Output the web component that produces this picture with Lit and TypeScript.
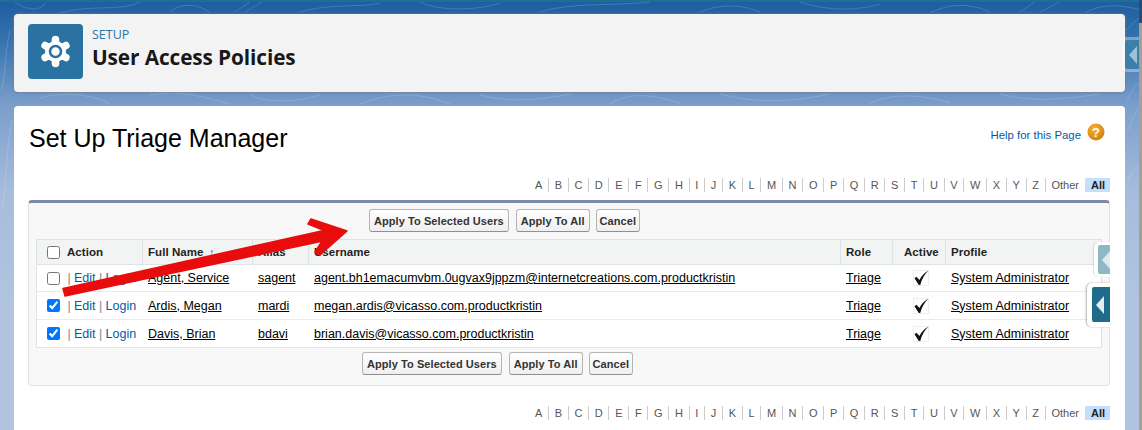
import { LitElement, html, css, svg } from "lit";
import { customElement } from "lit/decorators.js";

const LETTERS = [..."ABCDEFGHIJKLMNOPQRSTUVWXYZ", "Other"];
const USERS = [
  { checked: false, name: "Agent, Service", alias: "sagent", mail: "agent.bh1emacumvbm.0ugvax9jppzm@internetcreations.com.productkristin" },
  { checked: true, name: "Ardis, Megan", alias: "mardi", mail: "megan.ardis@vicasso.com.productkristin" },
  { checked: true, name: "Davis, Brian", alias: "bdavi", mail: "brian.davis@vicasso.com.productkristin" },
];

@customElement("app-root")
export class AppRoot extends LitElement {
  static styles = css`
    :host { display: block; position: relative; width: 1142px; height: 430px; overflow: hidden; font-family: "Liberation Sans", Arial, sans-serif; background: linear-gradient(180deg, #1b5d9e 0, #3f78b3 50px, #7b9ecb 105px, #a5bcdc 190px, #b0c4df 300px); }
    .topline { height: 2px; background: #1f6e93; }
    .rail { position: absolute; right: 0; top: 0; bottom: 0; width: 3px; background: #a59f9a; }
    .rail-top { position: absolute; right: 0; top: 0; height: 23px; width: 3px; background: #2c4a73; }
    .topo { position: absolute; inset: 0; width: 1142px; height: 430px; }
    .page { position: relative; display: flex; flex-direction: column; gap: 14px; padding: 12px 17px 0 14px; }
    .head { box-sizing: border-box; height: 78px; background: #f3f3f3; border-radius: 4px; box-shadow: 0 0 2px 1px rgba(120,120,120,.55); display: flex; align-items: flex-start; padding: 10px 14px; gap: 9px; }
    .logo { width: 55px; height: 55px; border-radius: 4px; background: #2a72a1; flex: none; display: block; }
    .crumb { color: #2a72a1; font: 12.5px/14px "Open Sans", sans-serif; margin-top: 4px; }
    .title { color: #181818; font: 700 20.8px/28px "Open Sans", sans-serif; margin-top: 1px; letter-spacing: -.1px; }
    .card { background: #fff; border-radius: 4px 4px 0 0; height: 340px; padding: 0 15px 0 14px; }
    .top { display: flex; justify-content: space-between; padding-top: 17px; height: 40px; }
    h1 { margin: 0 0 0 1px; font: 400 25px/30px "Liberation Sans", sans-serif; color: #000; }
    .help { display: flex; gap: 6px; align-items: flex-start; padding-right: 5px; color: #015ba7; font-size: 11.4px; }
    .help span { padding-top: 6px; }
    .alpha { display: flex; justify-content: flex-end; height: 14px; align-items: center; font-size: 11px; color: #555; }
    .alpha.one { margin-top: 15px; }
    .alpha.two { margin-top: 20px; }
    .alpha span { padding: 0 5.71px; border-right: 1px solid #ccc; line-height: 14px; }
    .alpha span:nth-last-child(2) { border-right: 0; padding-right: 6px; }
    .alpha b { background: #c3dffc; color: #222; padding: 0 5px 0 6px; line-height: 14px; }
    .panel { box-sizing: border-box; margin-top: 8px; height: 186px; background: #f8f8f8; border: 1px solid #e0e3e5; border-top: 3px solid #7c89a8; border-radius: 4px; padding: 6px 7px 0; }
    .btns { display: flex; gap: 7px; height: 23px; }
    .btns.t { padding-left: 333px; margin-bottom: 7px; }
    .btns.b { padding-left: 326px; margin-top: 4px; }
    button { box-sizing: border-box; height: 23px; padding: 0 4px; border: 1px solid #b5b5b5; border-bottom-color: #8f8f8f; border-radius: 3px; background: linear-gradient(#fff, #efefef); color: #333; font: 700 11px "Liberation Sans", sans-serif; letter-spacing: .07px; white-space: nowrap; }
    button:last-child { margin-left: -1px; padding: 0 3px; }
    .table { width: 1066px; border: 1px solid #e0e3e5; background: #fff; display: grid; grid-template-columns: 106px 110px 56px 532px 52px 53px 155px; font-size: 12.5px; color: #000; box-sizing: border-box; }
    .th { height: 25px; background: #f2f3f3; border-bottom: 1px solid #e0e3e5; border-right: 1px solid #e0e3e5; display: flex; align-items: center; padding-left: 5px; font-weight: 700; font-size: 11.5px; color: #222; letter-spacing: .05px; box-sizing: border-box; }
    .th:nth-child(7) { border-right: 0; }
    .th.first { padding-left: 10px; gap: 7px; }
    .th.center { padding-left: 11px; }
    .sort { color: #666; font-size: 13px; margin-left: 5px; }
    input { width: 13px; height: 13px; margin: 0; accent-color: #0075ff; }
    .td { height: 28px; border-bottom: 1px solid #e8eaec; display: flex; align-items: center; padding-left: 5px; box-sizing: border-box; white-space: nowrap; }
    .td.r0 { height: 27px; }
    .td.r2 { border-bottom: 0; height: 27px; }
    .td.act { padding-left: 10px; color: #888; }
    .td.act a { color: #015ba7; }
    .td.act i { font-style: normal; padding: 0 3.4px; }
    .td.act input { margin-right: 4px; }
    .td.center { justify-content: center; padding: 0 0 0 3px; }
    .td u { color: #000; }
    .check { width: 16px; height: 16px; display: block; }
    .tab { position: absolute; box-sizing: border-box; background: #fff; border-radius: 5px 0 0 5px; display: flex; align-items: center; }
    .tab .fill { display: flex; align-items: center; justify-content: flex-start; height: 100%; width: 100%; border-radius: 2px 0 0 2px; }
    .tab svg { display: block; margin-left: 4px; }
    .tab1 { left: 1094px; top: 242px; width: 16px; height: 35px; padding: 3px 0 3px 4px; box-shadow: -1px 0 1px rgba(0,0,0,.12); }
    .tab1 .fill { background: #8fb8c6; }
    .tab2 { left: 1087px; top: 283px; width: 23px; height: 44px; padding: 4px 0 5px 5px; box-shadow: -1px 0 2px rgba(0,0,0,.3); }
    .tab2 .fill { background: #1f6c8a; }
    .tab3 { left: 1122px; top: 37px; width: 17px; height: 35px; padding: 3px 0 3px 3px; background: rgba(255,255,255,.35); }
    .tab3 .fill { background: #3c7fa8; }
    .arrow { position: absolute; left: 0; top: 0; width: 1142px; height: 430px; pointer-events: none; }
  `;

  private tri(fill: string) {
    return html`<svg width="8" height="18" viewBox="0 0 8 18"><path d="M8 0V18L0 9Z" fill=${fill}/></svg>`;
  }

  private alpha(cls: string) {
    return html`<div class="alpha ${cls}">${LETTERS.map((l) => html`<span>${l}</span>`)}<b>All</b></div>`;
  }

  private buttons(cls: string) {
    return html`<div class="btns ${cls}"><button>Apply To Selected Users</button><button>Apply To All</button><button>Cancel</button></div>`;
  }

  private gear() {
    const lobes = [0, 60, 120, 180, 240, 300].map((a) => svg`<line x1="27.5" y1="27.5" x2="27.5" y2="15.5" stroke="#fff" stroke-width="7.5" stroke-linecap="round" transform="rotate(${a} 27.5 27.5)"/>`);
    return html`<svg class="logo" viewBox="0 0 55 55">${lobes}<circle cx="27.5" cy="27.5" r="10.5" fill="#fff"/><circle cx="27.5" cy="27.5" r="5.5" fill="none" stroke="#2a72a1" stroke-width="2.6"/></svg>`;
  }

  private tick() {
    return html`<svg class="check" viewBox="0 0 16 16"><rect x=".5" y=".5" width="15" height="15" fill="none" stroke="#ddd" stroke-dasharray="1 1"/><path d="M1.5 8.2 3.5 6.8 6.4 10C8.4 6.2 11 3 15.5 .5 11.5 4.5 8.8 9 7.2 15H5.8Z" fill="#111"/></svg>`;
  }

  render() {
    return html`
      <svg class="topo" viewBox="0 0 1142 430" fill="none" stroke="#fff" stroke-opacity=".16">
        <path d="M15 2C25 10 40 12 45 3M60 13C90 4 120 12 140 2M170 12C180 2 200 4 210 13M235 12 250 2M245 12 262 2M300 12C330 3 360 8 380 3M420 2C440 12 480 10 500 3M540 12C570 2 620 6 650 2M700 12C720 4 740 4 760 12M800 2C830 12 860 10 880 4M930 13C950 3 970 3 990 12M1020 12 1035 2M1040 12 1060 2M1085 13C1100 4 1120 4 1140 10"/>
        <path d="M1126 30C1132 25 1135 20 1140 18M1127 100C1132 90 1136 85 1140 82M1128 130C1134 115 1136 110 1140 106M1128 180C1133 170 1136 168 1140 166"/>
        <path d="M40 98C60 92 90 93 110 104M150 95C180 90 200 96 230 104M250 94C260 102 290 104 320 95M360 104C390 92 420 92 450 104M480 95C510 103 540 100 570 94M610 104C630 92 650 94 680 103M720 94C760 104 790 102 830 94M870 104C885 94 920 93 950 103M1000 94C1030 102 1060 100 1100 94M10 30C5 50 6 70 2 90M12 120C6 150 7 180 2 210"/>
      </svg>
      <div class="rail"></div><div class="rail-top"></div>
      <div class="topline"></div>
      <div class="page">
        <div class="head">
          ${this.gear()}
          <div><div class="crumb">SETUP</div><div class="title">User Access Policies</div></div>
        </div>
        <div class="card">
          <div class="top">
            <h1>Set Up Triage Manager</h1>
            <div class="help"><span>Help for this Page</span>
              <svg width="18" height="18" viewBox="0 0 18 18"><defs><radialGradient id="o" cx=".4" cy=".3" r=".8"><stop offset="0" stop-color="#f5b32e"/><stop offset="1" stop-color="#d07a0c"/></radialGradient></defs><circle cx="9" cy="9" r="8.5" fill="url(#o)"/><text x="9" y="13.5" text-anchor="middle" font-size="13" font-weight="700" fill="#fff" font-family="Liberation Sans">?</text></svg>
            </div>
          </div>
          ${this.alpha("one")}
          <div class="panel">
            ${this.buttons("t")}
            <div class="table">
              <div class="th first"><input type="checkbox" />Action</div>
              <div class="th">Full Name <span class="sort">↑</span></div>
              <div class="th">Alias</div>
              <div class="th">Username</div>
              <div class="th">Role</div>
              <div class="th center">Active</div>
              <div class="th">Profile</div>
              ${USERS.map((u, i) => {
                const l = "r" + i;
                return html`
                  <div class="td act ${l}"><input type="checkbox" ?checked=${u.checked} /><i>|</i><a>Edit</a><i>|</i><a>Login</a></div>
                  <div class="td ${l}"><u>${u.name}</u></div>
                  <div class="td ${l}"><u>${u.alias}</u></div>
                  <div class="td ${l}"><u>${u.mail}</u></div>
                  <div class="td ${l}"><u>Triage</u></div>
                  <div class="td center ${l}">${this.tick()}</div>
                  <div class="td ${l}"><u>System Administrator</u></div>`;
              })}
            </div>
            ${this.buttons("b")}
          </div>
          ${this.alpha("two")}
        </div>
      </div>
      <div class="tab tab3"><div class="fill">${this.tri("#9cc3d8")}</div></div>
      <div class="tab tab1"><div class="fill">${this.tri("#dfeaee")}</div></div>
      <div class="tab tab2"><div class="fill">${this.tri("#e6edf0")}</div></div>
      <svg class="arrow" viewBox="0 0 1142 430">
        <path d="M63 288.5 335 228 337 238 65 296Z" fill="#e80c0c" stroke="#e80c0c" stroke-width="1.5" stroke-linejoin="round"/>
        <path d="M347 231 311 219 308 224 328 232 315 252 320 255Z" fill="#e80c0c" stroke="#e80c0c" stroke-width="1.5" stroke-linejoin="round"/>
      </svg>
    `;
  }
}
